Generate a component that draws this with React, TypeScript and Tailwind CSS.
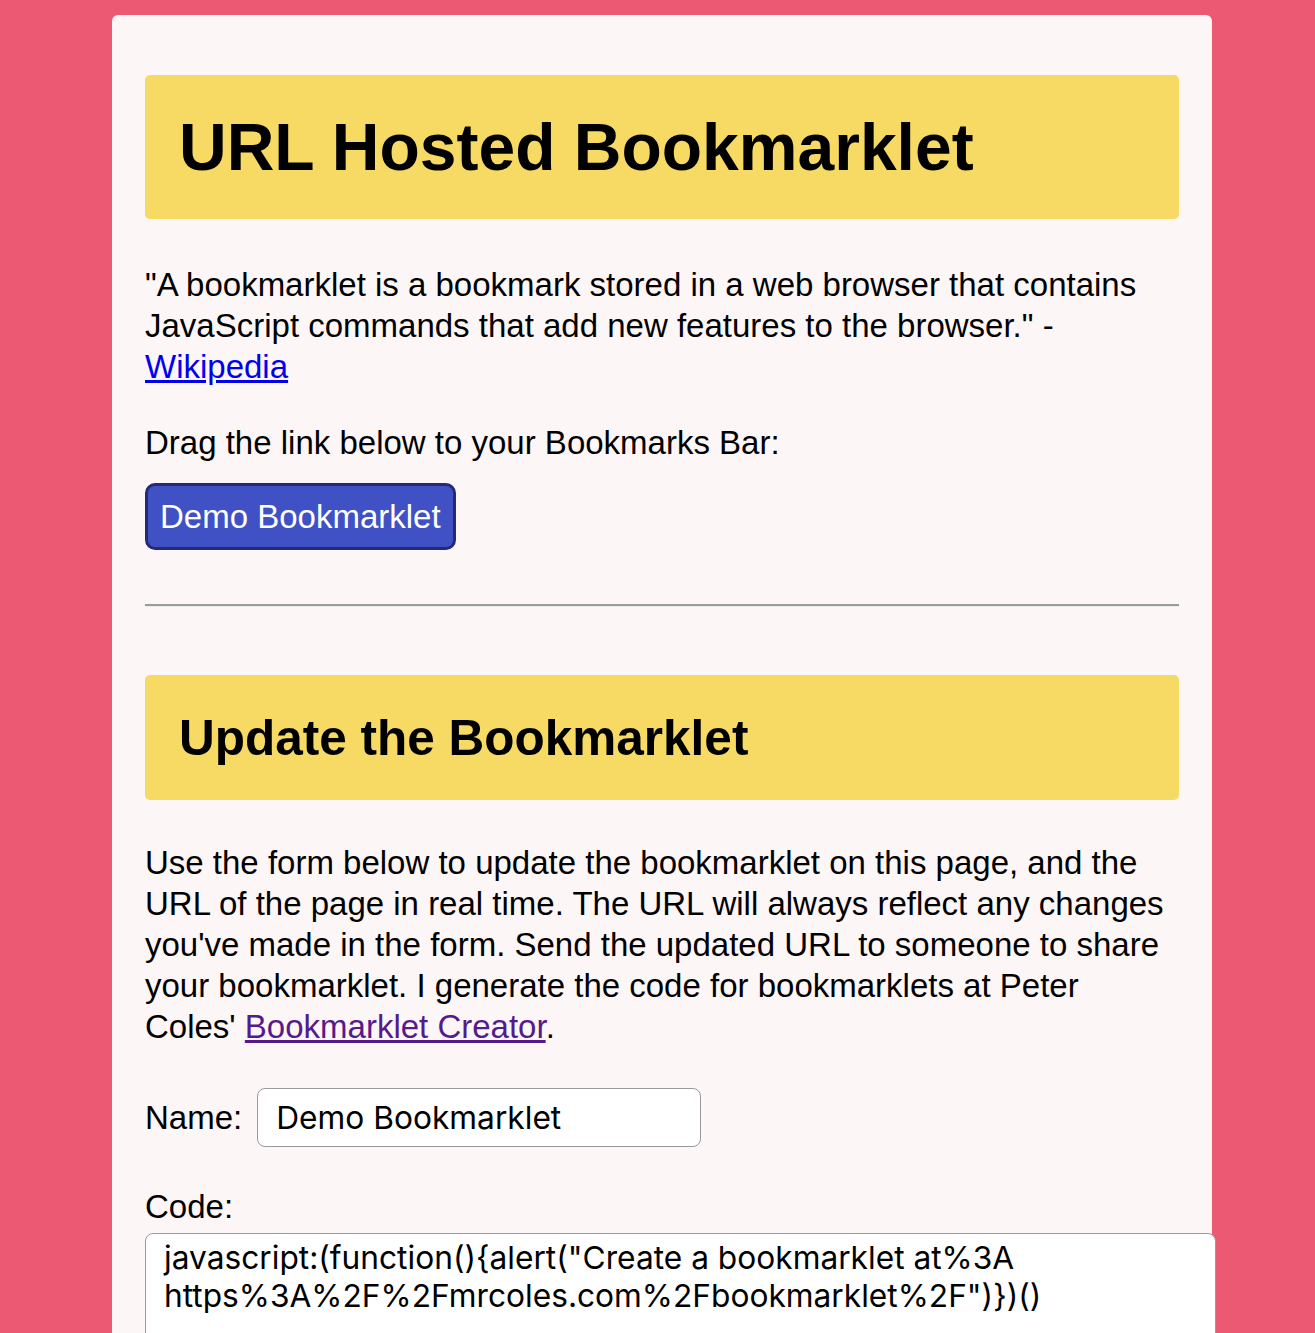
export default function App() {
  return (
    <div className="min-h-screen bg-[#eb5a72] pt-[15px] font-['Liberation_Sans',Arial,sans-serif] text-black">
      <main className="ml-[112px] w-[1100px] min-h-[1400px] rounded-t-[6px] bg-[#fdf6f6] px-[33px] pt-[60px]">
        <div className="flex h-[144px] items-center rounded-[5px] bg-[#f7da63] px-[34px]">
          <h1 className="text-[66px] font-bold leading-none">URL Hosted Bookmarklet</h1>
        </div>

        <p className="mt-[45px] text-[33px] leading-[41px]">
          "A bookmarklet is a bookmark stored in a web browser that contains JavaScript commands that add new
          features to the browser." -{" "}
          <a href="#" className="text-[#0000ee] underline">Wikipedia</a>
        </p>

        <p className="mt-[35px] text-[33px] leading-[41px]">Drag the link below to your Bookmarks Bar:</p>

        <div className="mt-[20px]">
          <a
            href="#"
            className="inline-flex h-[67px] items-center rounded-[10px] border-[3px] border-[#262a76] bg-[#3f51c4] px-[12px] text-[33px] text-white"
          >
            Demo Bookmarklet
          </a>
        </div>

        <hr className="mt-[54px] border-t-2 border-[#9b9b9b] border-b border-b-[#ececec]" />

        <div className="mt-[68px] flex h-[125px] items-center rounded-[5px] bg-[#f7da63] px-[34px]">
          <h2 className="text-[49.5px] font-bold leading-none">Update the Bookmarklet</h2>
        </div>

        <p className="mt-[42px] pr-[8px] text-[33px] leading-[41px]">
          Use the form below to update the bookmarklet on this page, and the URL of the page in real time. The
          URL will always reflect any changes you've made in the form. Send the updated URL to someone to share
          your bookmarklet. I generate the code for bookmarklets at Peter Coles'{" "}
          <a href="#" className="text-[#551a8b] underline">Bookmarklet Creator</a>.
        </p>

        <form className="mt-[41px]">
          <label className="flex items-center gap-[15px] text-[33px]">
            <span>Name:</span>
            <input
              defaultValue="Demo Bookmarklet"
              className="h-[59px] w-[444px] rounded-[8px] border-[1.5px] border-[#9a9a9a] bg-white px-[18px] font-['Inter',sans-serif] text-[31.7px] text-black outline-none"
            />
          </label>

          <label className="mt-[39px] block text-[33px] leading-[41px]">Code:</label>
          <textarea
            defaultValue={'javascript:(function(){alert("Create a bookmarklet at%3A https%3A%2F%2Fmrcoles.com%2Fbookmarklet%2F")})()'}
            className="mt-[6px] block h-[200px] w-[1071px] resize-none rounded-[8px] border-[1.5px] border-[#9a9a9a] bg-white px-[18px] py-[5px] font-['Inter',sans-serif] text-[31.7px] leading-[38px] text-black outline-none"
          />
        </form>
      </main>
    </div>
  );
}
